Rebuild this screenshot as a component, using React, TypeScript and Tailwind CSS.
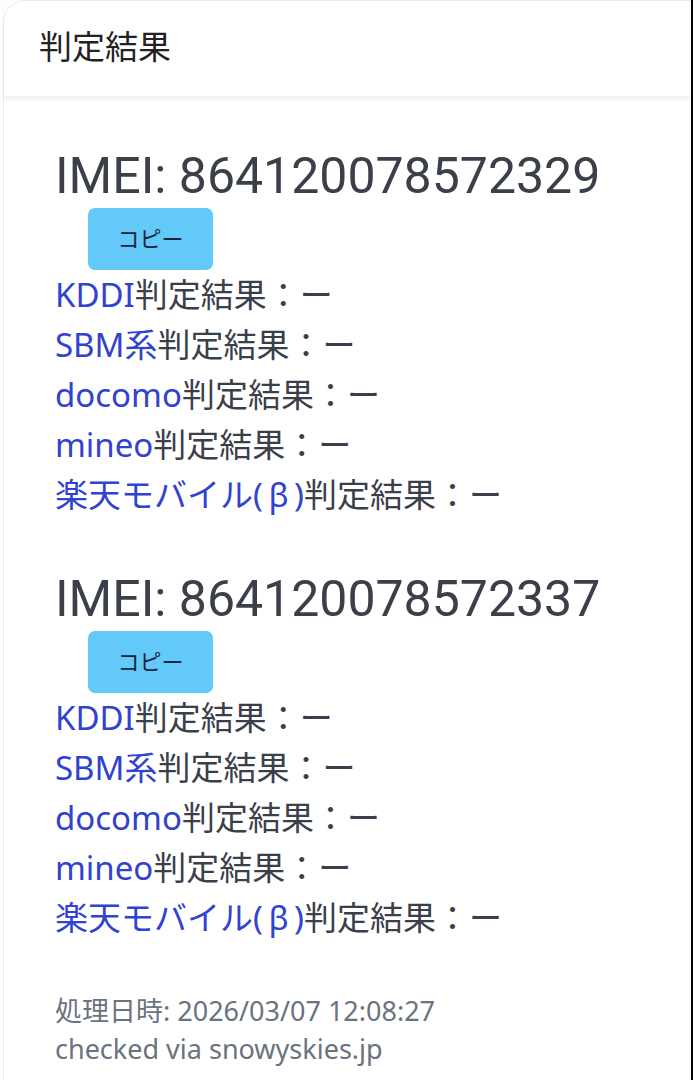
const FONT = "font-['Roboto','Noto_Sans_CJK_JP',sans-serif]";
const BODY_FONT = "font-['Noto_Sans','Noto_Sans_CJK_JP',sans-serif]";

const carriers: { name: string; suffix?: string }[] = [
  { name: "KDDI" },
  { name: "SBM系" },
  { name: "docomo" },
  { name: "mineo" },
  { name: "楽天モバイル", suffix: "(\u2009β\u2009)" },
];

function ImeiBlock({ imei }: { imei: string }) {
  return (
    <div className="mb-[49px]">
      <h2 className="text-[50px] leading-[60px] text-[#3b3f4a]">IMEI: {imei}</h2>
      <button
        type="button"
        className="ml-[33px] mt-[2px] h-[62px] w-[125px] rounded-[7px] bg-[#62c9f8] text-[22px] text-[#14243d]"
      >
        コピー
      </button>
      <ul className={`text-[33px] leading-[50px] text-[#3b3f4a] ${BODY_FONT}`}>
        {carriers.map((c) => (
          <li key={c.name}>
            <span className="text-[#3042cf]">
              {c.name}
              {c.suffix ?? ""}
            </span>
            判定結果：ー
          </li>
        ))}
      </ul>
    </div>
  );
}

export default function App() {
  return (
    <div className={`flex min-h-[1080px] bg-white ${FONT}`}>
      <div className="ml-[3px] flex-1 rounded-tl-[22px] border-l border-t border-[#ececec] bg-white">
        <div className="h-[95px] px-[35px] pt-[22px] text-[33px] text-[#222] shadow-[0_3px_5px_rgba(0,0,0,0.07)]">
          判定結果
        </div>
        <div className="px-[51px] pt-[50px]">
          <ImeiBlock imei="864120078572329" />
          <ImeiBlock imei="864120078572337" />
          <div className={`text-[27px] leading-[38px] text-[#6b7280] ${BODY_FONT}`}>
            <div>処理日時: 2026/03/07 12:08:27</div>
            <div>checked via snowyskies.jp</div>
          </div>
        </div>
      </div>
      <div className="w-[2px] bg-black" />
    </div>
  );
}
